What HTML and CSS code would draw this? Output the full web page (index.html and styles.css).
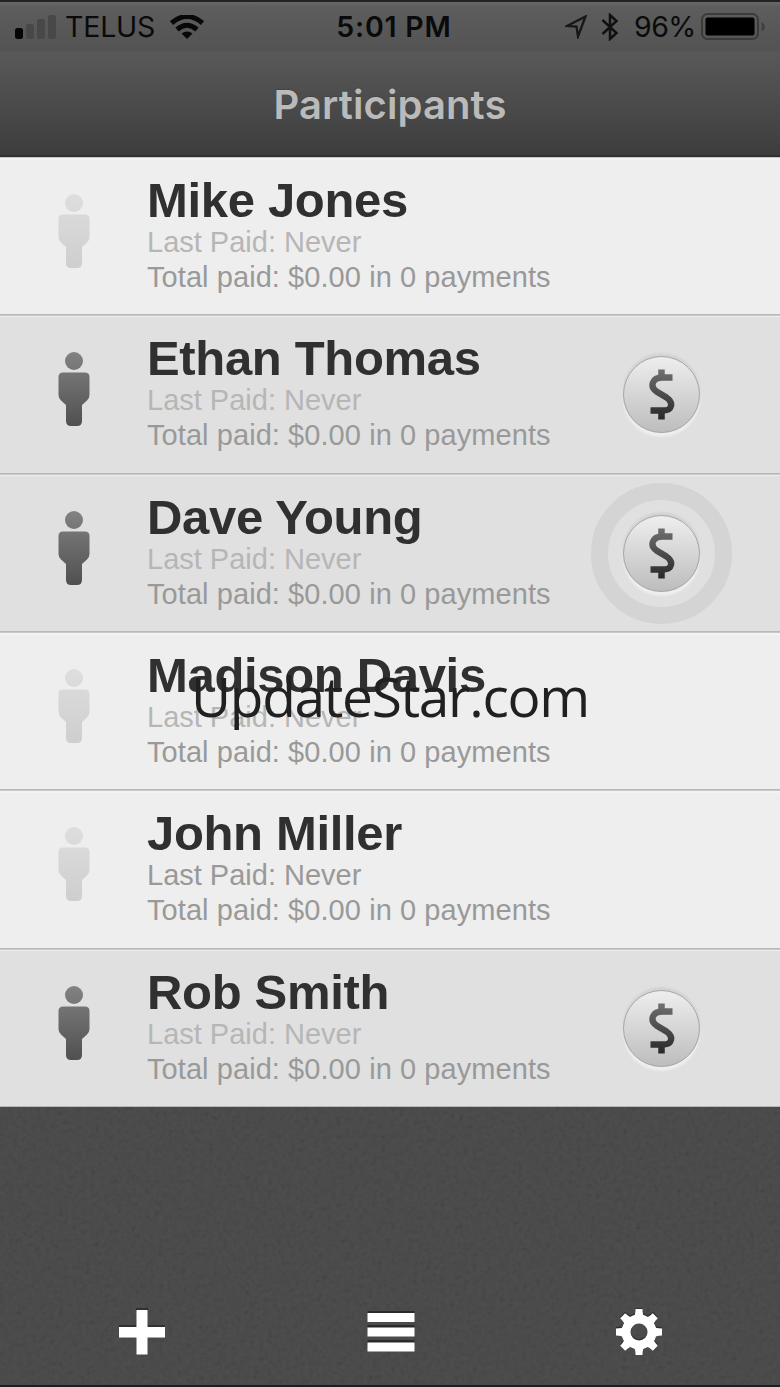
FILE: index.html
```html
<!DOCTYPE html>
<html lang="en">
<head>
<meta charset="utf-8">
<title>Participants</title>
<link rel="stylesheet" href="styles.css">
</head>
<body>
<svg class="defs" aria-hidden="true">
  <defs>
    <linearGradient id="active" x1="0" y1="0" x2="0" y2="74" gradientUnits="userSpaceOnUse"><stop offset="0" stop-color="#828282"/><stop offset="1" stop-color="#505050"/></linearGradient>
    <linearGradient id="idle" x1="0" y1="0" x2="0" y2="74" gradientUnits="userSpaceOnUse"><stop offset="0" stop-color="#dedede"/><stop offset="1" stop-color="#cecece"/></linearGradient>
    <linearGradient id="coin" x1="0" y1="0" x2="0" y2="50" gradientUnits="userSpaceOnUse"><stop offset="0" stop-color="#707070"/><stop offset="1" stop-color="#292929"/></linearGradient>
    <g id="person"><circle cx="16" cy="9" r="9"/><path d="M5 20.500H27Q31.500 20.500 31.500 25V43Q31.500 46 29 48.500L24 53V69Q24 74 19 74H13Q8 74 8 69V53L3 48.500Q.500 46 .500 43V25Q.500 20.500 5 20.500Z"/></g>
    <g id="dollar" fill="none" stroke="url(#coin)"><path d="M24.500 8.500H14.500C4 8.500 1.500 17.500 8.500 22.500L18.500 28.500C26 33.500 24 41.500 15.500 41.500H2.500" stroke-width="6.300"/><path d="M13.500 .500V9M13.500 42V50.500" stroke-width="6.500"/></g>
    <filter id="noise" x="0" y="0" width="100%" height="100%"><feTurbulence type="fractalNoise" baseFrequency=".22" numOctaves="3" seed="4"/><feColorMatrix values=".7 .3 0 0 -.22  .7 .3 0 0 -.22  .7 .3 0 0 -.22  0 0 0 0 1"/></filter>
  </defs>
</svg>
<div class="screen">
  <header class="header">
    <div class="status">
      <div class="status-left">
        <svg class="signal" width="41" height="25" viewBox="0 0 41 25"><rect x="0" y="13" width="8" height="11" rx="2.500" fill="#050505"/><g fill="#484848"><rect x="11" y="9" width="8" height="15" rx="2.500"/><rect x="22" y="4" width="8" height="20" rx="2.500"/><rect x="33" y="0" width="8" height="24" rx="2.500"/></g></svg>
        <span class="carrier">TELUS</span>
        <svg class="wifi" width="34" height="24" viewBox="0 0 34 24"><g fill="none" stroke="#080808" stroke-width="5"><path d="M1.500 8Q17-5 32.500 8"/><path d="M7 14.500Q17 6 27 14.500"/></g><path d="M11.500 18.500Q17 14.500 22.500 18.500L17 24Z" fill="#080808"/></svg>
      </div>
      <div class="time">5:01 PM</div>
      <div class="status-right">
        <svg class="location" width="23" height="24" viewBox="0 0 23 24"><path d="M2 11L20.500 1.500L13 21.500L11.500 11.500Z" fill="none" stroke="#171717" stroke-width="2.300"/></svg>
        <svg class="bluetooth" width="18" height="28" viewBox="0 0 18 28"><path d="M1.500 7L15.500 20L9 26V2L15.500 8L1.500 21" fill="none" stroke="#111" stroke-width="2.500"/></svg>
        <span class="percent">96%</span>
        <svg class="battery" width="65" height="28" viewBox="0 0 65 28"><rect x="1" y="1" width="56" height="25" rx="5.500" fill="none" stroke="#3b3b3b" stroke-width="2"/><rect x="4.500" y="4.500" width="49" height="18" rx="2" fill="#000"/><path d="M60.500 9Q64 11 64 13.500Q64 17 60.500 18.500Z" fill="#414141"/></svg>
      </div>
    </div>
    <h1 class="title">Participants</h1>
  </header>
  <main class="list">
    <section class="row">
      <svg class="person" width="32" height="75"><use href="#person" fill="url(#idle)"/></svg>
      <div class="info"><h2 class="name">Mike Jones</h2><p class="last">Last Paid: Never</p><p class="total">Total paid: $0.00 in 0 payments</p></div>
    </section>
    <section class="row selected">
      <svg class="person" width="32" height="75"><use href="#person" fill="url(#active)"/></svg>
      <div class="info"><h2 class="name">Ethan Thomas</h2><p class="last">Last Paid: Never</p><p class="total">Total paid: $0.00 in 0 payments</p></div>
      <div class="halo"><div class="coin"><svg width="27" height="51"><use href="#dollar"/></svg></div></div>
    </section>
    <section class="row selected">
      <svg class="person" width="32" height="75"><use href="#person" fill="url(#active)"/></svg>
      <div class="info"><h2 class="name">Dave Young</h2><p class="last">Last Paid: Never</p><p class="total">Total paid: $0.00 in 0 payments</p></div>
      <div class="halo ring"><div class="coin"><svg width="27" height="51"><use href="#dollar"/></svg></div></div>
    </section>
    <section class="row">
      <svg class="person" width="32" height="75"><use href="#person" fill="url(#idle)"/></svg>
      <div class="info"><h2 class="name">Madison Davis</h2><p class="last">Last Paid: Never</p><p class="total">Total paid: $0.00 in 0 payments</p></div>
    </section>
    <section class="row">
      <svg class="person" width="32" height="75"><use href="#person" fill="url(#idle)"/></svg>
      <div class="info"><h2 class="name">John Miller</h2><p class="last dark">Last Paid: Never</p><p class="total">Total paid: $0.00 in 0 payments</p></div>
    </section>
    <section class="row selected">
      <svg class="person" width="32" height="75"><use href="#person" fill="url(#active)"/></svg>
      <div class="info"><h2 class="name">Rob Smith</h2><p class="last">Last Paid: Never</p><p class="total">Total paid: $0.00 in 0 payments</p></div>
      <div class="halo"><div class="coin"><svg width="27" height="51"><use href="#dollar"/></svg></div></div>
    </section>
  </main>
  <footer class="footer">
    <svg class="texture"><rect width="100%" height="100%" filter="url(#noise)"/></svg>
    <nav class="toolbar">
      <svg class="tool" width="48" height="48" viewBox="0 0 48 48"><path d="M18 0H30V3H18ZM1 17H18V20H1ZM30 17H47V20H30Z" fill="#303030"/><path d="M18.500 2H29.500V19H47V29.500H29.500V46.500H18.500V29.500H1V19H18.500Z" fill="#fff"/></svg>
      <svg class="tool" width="48" height="48" viewBox="0 0 48 48"><path d="M.500 3H47.500V7H.500ZM.500 17H47.500V21H.500ZM.500 32H47.500V36H.500Z" fill="#2a2a2a"/><path d="M.500 5H47.500V14H.500ZM.500 19.500H47.500V28.500H.500ZM.500 34.500H47.500V43.500H.500Z" fill="#fff"/></svg>
      <svg class="tool" width="48" height="48" viewBox="0 0 48 48"><defs><g id="gear"><circle cx="24" cy="24" r="13" fill="none" stroke-width="9"/><g stroke="none"><path id="tooth" d="M18 9Q20.500 8 20.500 1H27.500Q27.500 8 30 9Z"/><use href="#tooth" transform="rotate(45 24 24)"/><use href="#tooth" transform="rotate(90 24 24)"/><use href="#tooth" transform="rotate(135 24 24)"/><use href="#tooth" transform="rotate(180 24 24)"/><use href="#tooth" transform="rotate(225 24 24)"/><use href="#tooth" transform="rotate(270 24 24)"/><use href="#tooth" transform="rotate(315 24 24)"/></g></g></defs><use href="#gear" y="-1.500" fill="#303030" stroke="#303030"/><use href="#gear" fill="#fff" stroke="#fff"/></svg>
    </nav>
  </footer>
  <div class="watermark">UpdateStar.com</div>
</div>
</body>
</html>
```
FILE: styles.css
```css
* { box-sizing: border-box; }
body { margin: 0; background: #484848; }
h1, h2, p { margin: 0; }
svg { display: block; flex: none; }
.defs { position: absolute; width: 0; height: 0; }
.screen { position: relative; width: 780px; height: 1387px; overflow: hidden; display: flex; flex-direction: column; font-family: "Liberation Sans", Arial, sans-serif; }
.header { height: 157px; flex: none; border-top: 2px solid #222; border-bottom: 2px solid #303030; background: linear-gradient(#686868 0, #5d5d5d 5px, #535353 49px, #595959 50px, #3d3d3d 100%); }
.status { height: 50px; display: grid; grid-template-columns: 1fr auto 1fr; align-items: center; padding: 0 14px 0 15px; font: 28.500px/50px Inter, sans-serif; color: #0a0a0a; }
.status-left, .status-right { display: flex; align-items: center; }
.status-right { justify-content: flex-end; }
.signal { margin-right: 9px; }
.carrier { letter-spacing: -.2px; width: 93px; white-space: nowrap; }
.wifi { margin-left: 12px; }
.time { font-weight: 600; letter-spacing: .8px; padding-left: 7px; }
.bluetooth { margin: 0 15px 0 13px; }
.percent { width: 61px; white-space: nowrap; letter-spacing: -.5px; margin-right: 6px; }
.title { text-align: center; color: #bababa; font: 600 40px/105px Inter, sans-serif; letter-spacing: .1px; text-shadow: 0 -1px 1px #444; }
.list { height: 950px; flex: none; display: grid; grid-template-rows: repeat(6, 1fr); }
.row { display: flex; background: #eee; border-top: 1px solid #c8c8c8; border-bottom: 1px solid #b8b8b8; box-shadow: inset 0 2px #f3f3f3; padding: 1px 0 0 58px; }
.selected { background: #e0e0e0; box-shadow: inset 0 1px #eee; }
.person { margin: 35px 57px 0 0; }
.info { width: 430px; padding-top: 16px; flex: none; white-space: nowrap; }
.name { font-size: 49px; line-height: 50px; letter-spacing: -.33px; color: #303030; }
.last, .total { font-size: 29px; line-height: 34px; color: #b6b6b6; }
.total { padding-top: 1px; letter-spacing: .07px; color: #999; }
.dark { color: #999; }
.halo { width: 141px; height: 141px; margin: 7px 0 0 14px; border-radius: 50%; display: grid; place-items: center; flex: none; }
.ring { border: 17px solid #d4d4d4; }
.coin { width: 77px; height: 77px; border: 1px solid #a5a5a5; border-radius: 50%; display: grid; place-items: center; background: linear-gradient(#eee, #bdbdbd); box-shadow: 0 -3px 2px #d3d3d3, 0 4px 2px #eee; }
.footer { position: relative; flex: 1; background: #474747; border-bottom: 2px solid #1e1e1e; }
.texture { position: absolute; inset: 0; width: 100%; height: 100%; opacity: .055; }
.toolbar { position: relative; display: flex; justify-content: space-between; padding: 201px 117px 0 118px; }
.watermark { position: absolute; left: 191px; top: 656px; white-space: nowrap; font: 55px/80px "Open Sans", sans-serif; letter-spacing: -1.300px; color: #202020; }
```
